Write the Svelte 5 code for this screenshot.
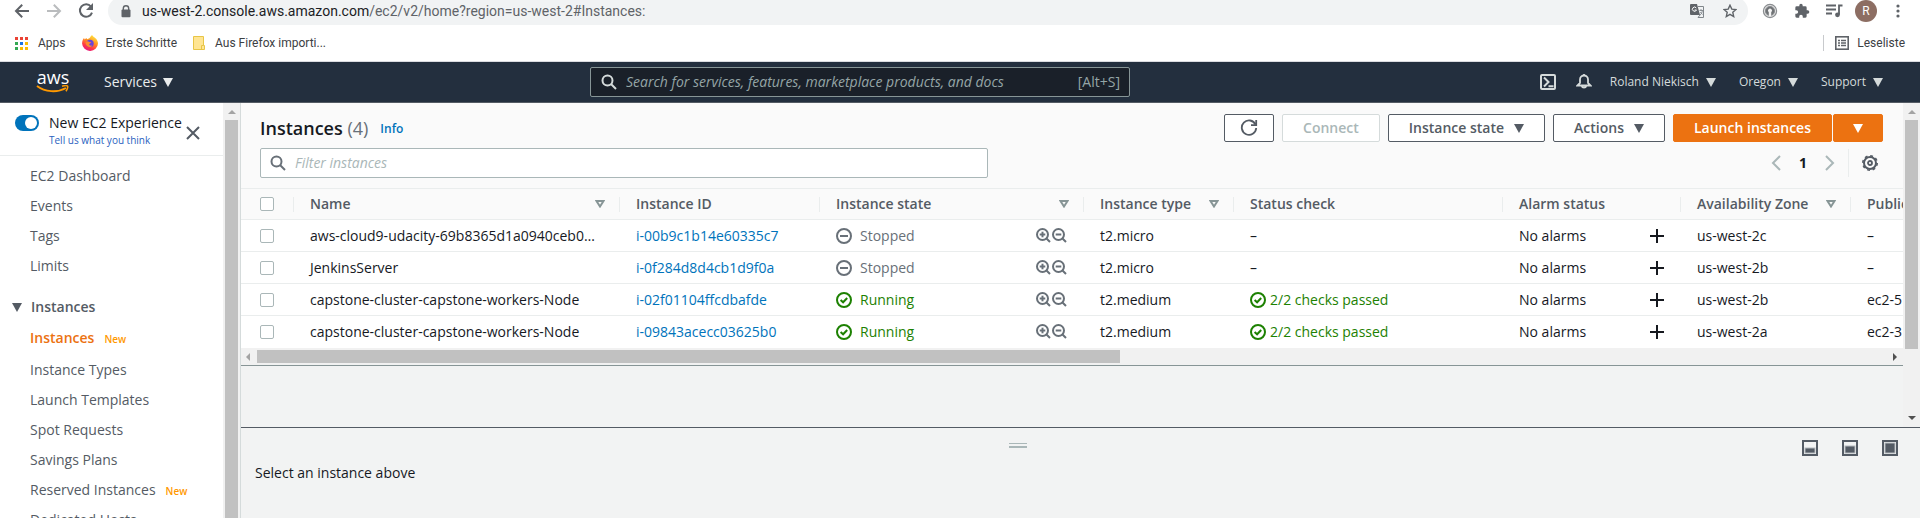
<script>
  const instances = [
    { name: 'aws-cloud9-udacity-69b8365d1a0940ceb0…', id: 'i-00b9c1b14e60335c7', running: false, type: 't2.micro', zone: 'us-west-2c', dns: '–' },
    { name: 'JenkinsServer', id: 'i-0f284d8d4cb1d9f0a', running: false, type: 't2.micro', zone: 'us-west-2b', dns: '–' },
    { name: 'capstone-cluster-capstone-workers-Node', id: 'i-02f01104ffcdbafde', running: true, type: 't2.medium', zone: 'us-west-2b', dns: 'ec2-5' },
    { name: 'capstone-cluster-capstone-workers-Node', id: 'i-09843acecc03625b0', running: true, type: 't2.medium', zone: 'us-west-2a', dns: 'ec2-3' }
  ];
  const columns = [
    { label: 'Name', sort: true },
    { label: 'Instance ID' },
    { label: 'Instance state', sort: true },
    { label: 'Instance type', sort: true },
    { label: 'Status check' },
    { label: 'Alarm status' },
    { label: 'Availability Zone', sort: true },
    { label: 'Public' }
  ];
  const topLinks = ['EC2 Dashboard', 'Events', 'Tags', 'Limits'];
  const instanceLinks = [
    { label: 'Instances', isNew: true, active: true },
    { label: 'Instance Types' },
    { label: 'Launch Templates' },
    { label: 'Spot Requests' },
    { label: 'Savings Plans' },
    { label: 'Reserved Instances', isNew: true },
    { label: 'Dedicated Hosts' }
  ];
  const accountMenus = ['Roland Niekisch', 'Oregon', 'Support'];
  const appColors = ['#ea4335', '#ea4335', '#ea4335', '#34a853', '#1a73e8', '#fbbc04', '#34a853', '#fbbc04', '#fbbc04'];
  const panelSizes = [
    { label: 'Small panel', y: 8, h: 5 },
    { label: 'Medium panel', y: 6, h: 7 },
    { label: 'Full panel', y: 3, h: 10 }
  ];
</script>

{#snippet caret()}
  <svg class="caret" width="10" height="9" viewBox="0 0 10 9" aria-hidden="true"><path d="M0 0h10L5 9z" fill="currentColor" /></svg>
{/snippet}

{#snippet glass()}
  <svg width="16" height="16" viewBox="0 0 16 16" fill="none" stroke="currentColor" stroke-width="2" aria-hidden="true"><circle cx="6.5" cy="6.5" r="5" /><path d="M10 10l5 5" /></svg>
{/snippet}

{#snippet check()}
  <svg width="16" height="16" viewBox="0 0 16 16" fill="none" stroke="currentColor" stroke-width="2" aria-hidden="true"><circle cx="8" cy="8" r="7" /><path d="M4.6 8l2.5 2.3 4.1-4.3" /></svg>
{/snippet}

{#snippet zoomIcon(plus)}
  <svg width="15" height="15" viewBox="0 0 15 15" fill="none" stroke="currentColor" stroke-width="2" aria-hidden="true"><circle cx="6.5" cy="6.5" r="5.5" /><path d="M10.5 10.5L14 14M3.7 6.5h5.6" />{#if plus}<path d="M6.5 3.7v5.6" />{/if}</svg>
{/snippet}

<div class="page">
  <div class="toolbar">
    <div class="history">
      <button aria-label="Back"><svg width="16" height="16" viewBox="0 0 16 16" fill="none" stroke="#5f6368" stroke-width="2"><path d="M15 8H2M8.2 1.8L2 8l6.2 6.2" /></svg></button>
      <button aria-label="Forward"><svg width="16" height="16" viewBox="0 0 16 16" fill="none" stroke="#babcbe" stroke-width="2"><path d="M1 8h13M7.8 1.8L14 8l-6.2 6.2" /></svg></button>
      <button aria-label="Reload"><svg width="16" height="16" viewBox="0 0 16 16"><path d="M13 3.6A6.2 6.2 0 1 0 14 9.6" fill="none" stroke="#5f6368" stroke-width="2" /><path d="M15 0v7H8z" fill="#5f6368" /></svg></button>
    </div>
    <div class="address">
      <svg width="10" height="13" viewBox="0 0 10 13" aria-hidden="true"><path d="M2.3 6V3.4a2.7 2.7 0 0 1 5.4 0V6" fill="none" stroke="#5f6368" stroke-width="1.4" /><rect x="0.5" y="4.6" width="9" height="7.6" rx="1" fill="#5f6368" /></svg>
      <span class="url">us-west-2.console.aws.amazon.com<span>/ec2/v2/home?region=us-west-2#Instances:</span></span>
      <button aria-label="Translate"><svg width="15" height="15" viewBox="0 0 15 15"><path d="M1 0h6l3 11H1a1 1 0 0 1-1-1V1a1 1 0 0 1 1-1z" fill="#5f6368" /><path d="M8 2.5h5.5v11H8l2-2.5" fill="none" stroke="#80868b" /><path d="M6.3 4A2.1 2.1 0 1 0 6.5 6H4.6" fill="none" stroke="#fff" /><path d="M9.5 6.5h3.500M11 5v1.500M10 11c1.500-1 2.200-2.500 2.300-4.500M10.300 8l2.200 2.500" stroke="#80868b" stroke-width=".9" fill="none" /></svg></button>
      <button aria-label="Bookmark this page"><svg width="14" height="14" viewBox="0 0 14 14"><path d="M7 1.200l1.800 3.900 4.200.4-3.200 2.800.9 4.200L7 10.400l-3.700 2.100.9-4.200L1 5.500l4.200-.4z" fill="none" stroke="#5f6368" stroke-width="1.400" /></svg></button>
    </div>
    <div class="extensions">
      <button aria-label="Privacy extension"><svg width="16" height="16" viewBox="0 0 16 16"><circle cx="8" cy="8" r="6.600" fill="#e4e4e4" stroke="#8a8d90" stroke-width="1.200" /><circle cx="8" cy="8" r="4.600" fill="#707376" stroke="#8a8d90" /><path d="M6.800 13V9.300a2 2 0 1 1 2.400 0V13z" fill="#f4f4f4" /></svg></button>
      <button aria-label="Extensions"><svg width="16" height="16" viewBox="0 0 24 24"><path d="M20.500 11H19V7a2 2 0 0 0-2-2h-4V3.500a2.500 2.500 0 0 0-5 0V5H4a2 2 0 0 0-2 2v3.800h1.500a2.700 2.700 0 0 1 0 5.400H2V20a2 2 0 0 0 2 2h3.800v-1.500a2.700 2.700 0 0 1 5.400 0V22H17a2 2 0 0 0 2-2v-4h1.500a2.500 2.500 0 0 0 0-5z" fill="#5f6368" /></svg></button>
      <button aria-label="Media controls"><svg width="17" height="14" viewBox="0 0 17 14"><path d="M0 1.500h10M0 5.500h10M0 9.500h6M16.500 1.500H13v9" stroke="#5f6368" stroke-width="1.800" fill="none" /><circle cx="11.500" cy="10.800" r="2.400" fill="#5f6368" /></svg></button>
      <button class="avatar" aria-label="Profile R">R</button>
      <button aria-label="Browser menu"><svg width="4" height="14" viewBox="0 0 4 14" fill="#5f6368"><circle cx="2" cy="2" r="1.600" /><circle cx="2" cy="7" r="1.600" /><circle cx="2" cy="12" r="1.600" /></svg></button>
    </div>
  </div>

  <div class="bookmarks">
    <a href="#apps" class="apps"><svg width="13" height="13" viewBox="0 0 13 13" aria-hidden="true">{#each appColors as color, i}<rect x={(i % 3) * 5} y={Math.floor(i / 3) * 5} width="3" height="3" fill={color} />{/each}</svg>Apps</a>
    <a href="#first"><svg width="16" height="16" viewBox="0 0 16 16" aria-hidden="true">
      <defs><linearGradient id="fox" x1="0.800" y1="0" x2="0.300" y2="1"><stop offset="0" stop-color="#fff04a" /><stop offset=".4" stop-color="#ff9a1f" /><stop offset=".75" stop-color="#ff3647" /><stop offset="1" stop-color="#e31587" /></linearGradient></defs>
      <path d="M10 0c1.200 1.600 1.800 2 3.200 3 1.700 1.200 2.800 3.400 2.800 5.500A7.800 7.800 0 0 1 8.100 16 7.900 7.900 0 0 1 .1 8.500C.1 6 1 4.100 2 3l.7 1.500L4.300 3l.9 1.200C6.800 4 8 3 8.600 1.600z" fill="url(#fox)" />
      <circle cx="8" cy="8.400" r="3.700" fill="#6b45d8" /><path d="M3.500 7c1.500-1.400 3-.6 3.800.1l1.900.2c-.4 1.300-1.700 1-2 2-.1 1 1 1.700 3 1.200C8.700 13.400 3.600 12.500 3.500 7z" fill="#ff8a2a" /></svg>Erste Schritte</a>
    <a href="#imported" class="folder"><svg width="12" height="14" viewBox="0 0 12 14" aria-hidden="true"><path d="M.5.5h10v9h1v4H.5z" fill="#ffe593" stroke="#e8c546" /><path d="M8.500 13V9.500h2" fill="none" stroke="#e8c546" /></svg>Aus Firefox importi...</a>
    <button class="reading"><svg width="14" height="14" viewBox="0 0 14 14" aria-hidden="true"><rect x=".8" y=".8" width="12.400" height="12.400" fill="none" stroke="#5f6368" stroke-width="1.600" /><path d="M3 4.500h2M6 4.500h5M3 7h2M6 7h5M3 9.500h2M6 9.500h5" stroke="#5f6368" stroke-width="1.400" /></svg>Leseliste</button>
  </div>

  <div class="console">
    <header>
      <div class="brand">
        <a href="#home" class="logo" aria-label="AWS home"><span>aws</span><svg width="34" height="9" viewBox="0 0 34 9" aria-hidden="true"><path d="M1 1c8 6 20 7 29 2" fill="none" stroke="#f90" stroke-width="2" /><path d="M26 1.200c2.500-.6 5-.8 5.500 0s-.2 3-1.500 5" fill="none" stroke="#f90" stroke-width="1.600" /></svg></a>
        <button class="services">Services {@render caret()}</button>
      </div>
      <label class="search">{@render glass()}<input type="text" aria-label="Search" placeholder="Search for services, features, marketplace products, and docs" /><span>[Alt+S]</span></label>
      <div class="account">
        <button aria-label="CloudShell"><svg width="16" height="16" viewBox="0 0 16 16" fill="none" stroke="currentColor" stroke-width="2"><rect x="1" y="1" width="14" height="14" rx="1" /><path d="M4 3.500L8.500 8 4 12.500M8.500 12.300h5" /></svg></button>
        <button aria-label="Notifications" class="bell"><svg width="16" height="16" viewBox="0 0 16 16" fill="none" stroke="currentColor" stroke-width="1.800"><path d="M1.500 11.500L4 9V5.500a4 4 0 0 1 8 0V9l2.500 2.500zM8 0v2M5.700 12a2.400 2.400 0 0 0 4.600 0" /></svg></button>
        {#each accountMenus as menu}<button class="menu">{menu} {@render caret()}</button>{/each}
      </div>
    </header>

    <div class="body">
      <aside>
        <div class="sidebar">
          <div class="experience">
            <input id="new-experience" type="checkbox" role="switch" checked />
            <div><label for="new-experience">New EC2 Experience</label><a href="#feedback">Tell us what you think</a></div>
            <button aria-label="Close navigation"><svg width="14" height="14" viewBox="0 0 14 14"><path d="M1 1l12 12M13 1L1 13" stroke="#545b64" stroke-width="2" /></svg></button>
          </div>
          <nav>
            {#each topLinks as label}<a href="#nav">{label}</a>{/each}
            <button class="group">{@render caret()}Instances</button>
            {#each instanceLinks as link}
              <a href="#nav" class:active={link.active}>{link.label}{#if link.isNew}<small>New</small>{/if}</a>
            {/each}
          </nav>
        </div>
        <div class="vbar"><i class="up"></i><div class="thumb"></div></div>
      </aside>

      <section class="workspace">
        <div class="upper">
          <main>
            <div class="heading">
              <h1>Instances <span>(4)</span></h1><a href="#info">Info</a>
              <div class="actions">
                <button class="btn refresh" aria-label="Refresh"><svg width="18" height="18" viewBox="0 0 18 18"><path d="M15.500 5.500A7.200 7.200 0 1 0 16.200 9" fill="none" stroke="currentColor" stroke-width="1.800" /><path d="M16.200 1v5.200H11" fill="none" stroke="currentColor" stroke-width="1.800" /></svg></button>
                <button class="btn" disabled>Connect</button>
                <button class="btn">Instance state {@render caret()}</button>
                <button class="btn">Actions {@render caret()}</button>
                <div class="split"><button class="btn primary">Launch instances</button><button class="btn primary more" aria-label="More launch options">{@render caret()}</button></div>
              </div>
            </div>
            <div class="filters">
              <label class="filter">{@render glass()}<input type="text" aria-label="Filter instances" placeholder="Filter instances" /></label>
              <div class="pager">
                <button aria-label="Previous page"><svg width="10" height="16" viewBox="0 0 10 16"><path d="M9 1L2 8l7 7" fill="none" stroke="#aab7b8" stroke-width="2" /></svg></button>
                <b>1</b>
                <button aria-label="Next page"><svg width="10" height="16" viewBox="0 0 10 16"><path d="M1 1l7 7-7 7" fill="none" stroke="#aab7b8" stroke-width="2" /></svg></button>
                <button class="gear" aria-label="Preferences"><svg width="16" height="16" viewBox="0 0 16 16" fill="none" stroke="#545b64"><circle cx="8" cy="8" r="6" stroke-width="2" /><circle cx="8" cy="8" r="7.200" stroke-width="1.600" stroke-dasharray="2.827 2.827" /><circle cx="8" cy="8" r="2" stroke-width="1.800" /></svg></button>
              </div>
            </div>
            <div class="scroller">
              <table>
                <colgroup><col class="c-pick" /><col class="c-name" /><col class="c-id" /><col class="c-state" /><col class="c-type" /><col class="c-status" /><col class="c-alarm" /><col class="c-zone" /><col class="c-dns" /></colgroup>
                <thead>
                  <tr>
                    <th class="pick"><input type="checkbox" aria-label="Select all instances" /></th>
                    {#each columns as column}
                      <th><div class="cell">{column.label}{#if column.sort}<svg width="10" height="8" viewBox="0 0 10 8" aria-hidden="true"><path d="M1.500 1h7L5 6.500z" fill="none" stroke="#879596" stroke-width="2" /></svg>{/if}</div></th>
                    {/each}
                  </tr>
                </thead>
                <tbody>
                  {#each instances as row}
                    <tr>
                      <td class="pick"><input type="checkbox" aria-label={'Select ' + row.id} /></td>
                      <td>{row.name}</td>
                      <td><a href="#instance">{row.id}</a></td>
                      <td>
                        <div class="cell">
                          <span class="state" class:ok={row.running}>
                            {#if row.running}{@render check()}Running{:else}<svg width="16" height="16" viewBox="0 0 16 16" fill="none" stroke="currentColor" stroke-width="2" aria-hidden="true"><circle cx="8" cy="8" r="7" /><path d="M4 8h8" /></svg>Stopped{/if}
                          </span>
                          <span class="zooms"><button aria-label="Include state in filter">{@render zoomIcon(true)}</button><button aria-label="Exclude state from filter">{@render zoomIcon(false)}</button></span>
                        </div>
                      </td>
                      <td>{row.type}</td>
                      <td>{#if row.running}<span class="state ok checks">{@render check()}2/2 checks passed</span>{:else}–{/if}</td>
                      <td><div class="cell">No alarms<button aria-label="Add alarm"><svg width="14" height="14" viewBox="0 0 14 14"><path d="M7 0v14M0 7h14" stroke="#16191f" stroke-width="2" /></svg></button></div></td>
                      <td>{row.zone}</td>
                      <td>{row.dns}</td>
                    </tr>
                  {/each}
                </tbody>
              </table>
            </div>
            <div class="hbar"><i class="left"></i><div class="rail"><div class="thumb"></div></div><i class="right"></i></div>
          </main>
          <div class="vbar"><i class="up"></i><div class="rail"><div class="thumb"></div></div><i class="down"></i></div>
        </div>

        <section class="panel">
          <div class="panel-bar">
            <div class="handle"></div>
            <div class="sizes">
              {#each panelSizes as size}
                <button aria-label={size.label}><svg width="16" height="16" viewBox="0 0 16 16"><rect x="1" y="1" width="14" height="14" fill="#f2f3f3" stroke="#545b64" stroke-width="2" /><rect x="3" y={size.y} width="10" height={size.h} fill="#545b64" stroke="#b4b9bd" /></svg></button>
              {/each}
            </div>
          </div>
          <p>Select an instance above</p>
        </section>
      </section>
    </div>
  </div>
</div>

<style>
  :global(body) { margin: 0; background: #fff; }
  .page { display: flex; flex-direction: column; height: 100vh; overflow: hidden; box-sizing: border-box; padding-right: 7px; font: 14px/20px "Open Sans", "Noto Sans", sans-serif; color: #16191f; }
  .page *, .page *::before { box-sizing: border-box; }
  button { display: inline-flex; align-items: center; border: 0; margin: 0; padding: 0; background: none; font: inherit; color: inherit; white-space: nowrap; }
  a { color: #0073bb; text-decoration: none; }
  svg { display: block; flex: none; }
  input { font: inherit; margin: 0; }

  .toolbar { display: flex; align-items: center; flex: none; height: 22px; background: #fff; font-family: "Roboto", sans-serif; }
  .history { display: flex; gap: 16px; width: 108px; padding-left: 14px; flex: none; }
  .address { display: flex; align-items: center; flex: 1; height: 28px; padding: 0 11px 0 13px; border-radius: 14px; background: #f1f3f4; min-width: 0; }
  .url { flex: 1; margin-left: 11px; color: #202124; white-space: nowrap; overflow: hidden; }
  .url span { color: #5f6368; }
  .address button { margin-left: 18px; }
  .extensions { display: flex; align-items: center; flex: none; gap: 16px; padding: 0 20px 0 14px; }
  .avatar { justify-content: center; width: 22px; height: 22px; margin: 0 3px 0 -4px; border-radius: 50%; background: #8d6e63; color: #fff; font-size: 12px; }

  .bookmarks { display: flex; align-items: center; flex: none; height: 40px; padding: 3px 15px 0 15px; border-bottom: 1px solid #dadce0; font-family: "Roboto", sans-serif; font-size: 12px; }
  .bookmarks a, .bookmarks button { display: flex; align-items: center; gap: 8px; color: #3c4043; }
  .bookmarks a { margin-right: 16px; }
  .bookmarks .apps, .bookmarks .folder { gap: 10px; }
  .bookmarks .reading { margin-left: auto; height: 16px; gap: 8px; padding-left: 11px; border-left: 1px solid #c8cacd; }

  .console { display: flex; flex-direction: column; flex: 1; min-height: 0; }
  header { display: flex; align-items: center; flex: none; height: 41px; background: #232f3e; border-bottom: 1px solid #545b64; color: #d5dbdb; }
  .brand { display: flex; align-items: center; width: 590px; padding-left: 36px; flex: none; }
  .logo { display: flex; flex-direction: column; align-items: center; width: 34px; margin-right: 34px; color: #fff; font-size: 18px; line-height: 15px; }
  .logo span { height: 15px; }
  .services { gap: 6px; color: #eaeded; }
  .search { display: flex; align-items: center; width: 540px; height: 30px; padding: 0 9px 0 10px; border: 1px solid #879596; border-radius: 2px; background: #1a2029; }
  .search input { flex: 1; min-width: 0; margin-left: 9px; padding: 0; border: 0; outline: 0; background: none; color: #fff; }
  .search input::placeholder { color: #95a5a6; font-style: italic; opacity: 1; }
  .search span { color: #95a5a6; }
  .account { display: flex; align-items: center; margin-left: auto; padding-right: 37px; font-size: 12px; }
  .bell { margin: 0 18px 0 20px; }
  .menu { gap: 7px; margin-left: 23px; }
  .bell + .menu { margin-left: 0; }

  .body { display: flex; flex: 1; min-height: 0; }
  aside { display: flex; flex: none; width: 241px; border-right: 1px solid #d5dbdb; overflow: hidden; }
  .sidebar { flex: 1; min-width: 0; overflow: hidden; background: #fff; }
  .experience { display: flex; align-items: center; height: 53px; padding: 0 23px 0 15px; border-bottom: 1px solid #eaeded; }
  .experience input { appearance: none; align-self: flex-start; flex: none; display: flex; justify-content: flex-end; width: 24px; height: 16px; margin: 12px 10px 0 0; padding: 2px; border-radius: 8px; background: #0073bb; }
  .experience input::before { content: ""; width: 12px; height: 12px; border-radius: 50%; background: #fff; }
  .experience div { flex: 1; display: flex; flex-direction: column; padding-top: 3px; white-space: nowrap; min-width: 0; }
  .experience label { line-height: 18px; }
  .experience div a { font-size: 10px; line-height: 16px; color: #2b5fc0; }
  .experience button { margin-top: 8px; }
  nav { display: flex; flex-direction: column; padding-top: 5px; }
  nav a { display: flex; align-items: center; flex: none; height: 30px; padding-left: 30px; color: #545b64; white-space: nowrap; }
  nav a.active { margin-bottom: 2px; color: #ec7211; font-weight: 600; }
  nav small { margin: 2px 0 0 10px; color: #ff9900; font-size: 10px; font-weight: 600; }
  .group { flex: none; height: 32px; margin-top: 10px; padding-left: 12px; gap: 9px; color: #545b64; font-weight: 600; }

  .vbar { display: flex; flex-direction: column; align-items: center; flex: none; width: 17px; background: #f1f1f1; }
  .vbar i { flex: none; height: 17px; }
  i::before { content: ""; display: block; border: 4px solid transparent; }
  .up::before { border-bottom-color: #a3a3a3; margin-top: 3px; }
  .down::before { border-top-color: #505050; margin-top: 6px; }
  .left::before { border-right-color: #a3a3a3; }
  .right::before { border-left-color: #505050; }
  .vbar .rail { flex: 1; }
  .vbar .thumb { width: 13px; background: #c1c1c1; }
  aside .thumb { flex: 1; }
  .rail .thumb { height: 79%; }

  .workspace { display: flex; flex-direction: column; flex: 1; min-width: 0; }
  .upper { display: flex; flex: 1; min-height: 0; }
  main { flex: 1; min-width: 0; background: #f2f3f3; }
  .heading { display: flex; align-items: center; padding: 11px 20px 0 19px; background: #fafafa; }
  h1 { margin: 0; font-size: 18px; line-height: 28px; font-weight: 600; }
  h1 span { color: #687078; font-weight: 400; }
  .heading > a { margin: 2px 0 0 12px; font-size: 12px; font-weight: 600; }
  .actions { display: flex; gap: 8px; margin-left: auto; }
  .btn { justify-content: center; gap: 10px; height: 28px; padding: 0 20px; border: 1px solid #545b64; border-radius: 2px; background: #fff; color: #545b64; font-weight: 600; }
  .btn:disabled { border-color: #d5dbdb; color: #aab7b8; }
  .btn.refresh, .btn.more { width: 50px; padding: 0; }
  .split { display: flex; gap: 1px; }
  .btn.primary { border-color: #ec7211; background: #ec7211; color: #fff; }

  .filters { display: flex; align-items: center; padding: 6px 25px 10px 19px; background: #fafafa; }
  .filter { display: flex; align-items: center; flex: none; width: 45%; height: 30px; padding: 0 9px; border: 1px solid #aab7b8; border-radius: 2px; background: #fff; color: #687078; }
  .filter input { flex: 1; min-width: 0; margin-left: 9px; padding: 0; border: 0; outline: 0; background: none; }
  .filter input::placeholder { color: #aab7b8; font-style: italic; opacity: 1; }
  .pager { display: flex; align-items: center; gap: 18px; margin-left: auto; }
  .gear { height: 28px; margin-left: -5px; padding-left: 13px; border-left: 1px solid #eaeded; }

  .scroller { overflow: hidden; border-top: 1px solid #eaeded; }
  table { width: 2100px; table-layout: fixed; border-collapse: separate; border-spacing: 0; background: #fff; }
  .c-pick { width: 53px; }
  .c-name { width: 326px; }
  .c-id { width: 200px; }
  .c-state { width: 264px; }
  .c-type { width: 150px; }
  .c-status { width: 269px; }
  .c-alarm { width: 178px; }
  .c-zone { width: 170px; }
  th, td { padding: 0 17px 0 16px; text-align: left; white-space: nowrap; overflow: hidden; }
  th { height: 31px; padding: 0; background: #fafafa; border-bottom: 1px solid #eaeded; color: #545b64; font-weight: 600; }
  th .cell { padding: 0 15px 0 16px; }
  th.pick { padding-left: 19px; }
  th:not(:last-child) { background: linear-gradient(#eaeded, #eaeded) right center / 1px 15px no-repeat #fafafa; }
  td { height: 32px; border-bottom: 1px solid #eaeded; }
  tbody tr:last-child td { border-bottom-color: #fff; }
  td.pick { padding-left: 19px; }
  .pick input { appearance: none; display: block; width: 14px; height: 14px; border: 1px solid #aab7b8; border-radius: 2px; background: #fff; }
  .cell { display: flex; align-items: center; justify-content: space-between; }
  .state { display: flex; align-items: center; gap: 8px; color: #687078; }
  .ok { color: #1d8102; }
  .checks { gap: 4px; }
  .zooms { display: flex; gap: 1px; color: #687078; }

  .hbar { display: flex; align-items: center; height: 18px; padding: 0 2px 0 1px; background: #f1f1f1; border-bottom: 1px solid #879596; }
  .hbar .rail { flex: 1; padding: 0 7px; }
  .hbar i { flex: none; width: 8px; }
  .hbar .thumb { width: 53%; height: 13px; background: #c1c1c1; }

  .panel { flex: none; height: 91px; border-top: 1px solid #545b64; background: #f2f3f3; }
  .panel-bar { display: grid; grid-template-columns: 6fr auto 7fr; align-items: start; padding: 12px 22px 0; }
  .handle { grid-column: 2; width: 18px; height: 5px; margin-top: 3px; border: solid #aab7b8; border-width: 1px 0 2px; }
  .sizes { display: flex; gap: 24px; justify-content: flex-end; }
  .panel p { margin: 7px 14px; }
</style>
